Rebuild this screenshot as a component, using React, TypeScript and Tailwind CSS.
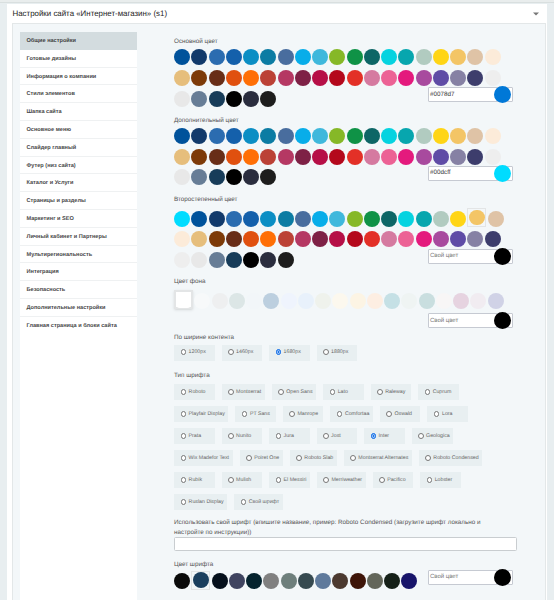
const side = [
  "Общие настройки", "Готовые дизайны", "Информация о компании", "Стили элементов", "Шапка сайта",
  "Основное меню", "Слайдер главный", "Футер (низ сайта)", "Каталог и Услуги", "Страницы и разделы",
  "Маркетинг и SEO", "Личный кабинет и Партнеры", "Мультирегиональность", "Интеграция", "Безопасность",
  "Дополнительные настройки", "Главная страница и блоки сайта",
];

const row1 = ["#00529b", "#123a6b", "#2b6cb0", "#1460ab", "#0b8ec4", "#0c7ca3", "#496d9e", "#08ade9", "#3fb8dc", "#86b827", "#0f9246", "#0d6666", "#05d3e0", "#07a6ae", "#b1cbc0", "#ffd516", "#f3c566", "#dfc3a6", "#fcebd9"];
const row2 = ["#e6be7c", "#7d3a08", "#682d17", "#e0500f", "#ff6f06", "#bb4136", "#b53863", "#7e2146", "#b60f47", "#b4081c", "#e33027", "#d57aa0", "#ec6295", "#e41a7d", "#a84a9e", "#5f4ca6", "#8681a4", "#3d3d6c", "#eeeeee"];
const row3 = ["#e8e8e8", "#677d96", "#173c59", "#000000", "#2a2d3e", "#1d1d1d"];
const base = [...row1, ...row2, ...row3];
const third = ["#00dcff", ...row1, ...row2];
const bg = ["#ffffff", "#f7f9fa", "#eeeff0", "#dce6e6", "#f2f6f9", "#bccfdf", "#eff4fd", "#e8f1fb", "#eff2ec", "#fcf8ee", "#fcf4e4", "#fdeee2", "#c5e0e5", "#eff4f3", "#c9dedf", "#f8f6f6", "#e6d3e0", "#f1ecf1", "#d0d2e6"];
const fontColors = ["#0a0a0a", "#1b3f5e", "#05101c", "#3f4460", "#05232e", "#808080", "#6e7f7c", "#364a50", "#5f7a9c", "#4c3a30", "#3e1508", "#63665a", "#152018", "#17146a"];

function Swatch({ color, selected, square }: { color: string; selected?: boolean; square?: boolean }) {
  if (selected) {
    return (
      <div className="w-[20.2px] h-[20.7px] flex items-center justify-center -mt-[1px]">
        <div className={`w-[19px] h-[19px] flex items-center justify-center border border-[#e3e5e6] ${square ? "border-2 border-[#dcdfe0] bg-white shadow-sm" : ""}`}>
          <div className={`w-[15.6px] h-[15.6px] ${square ? "rounded-sm" : "rounded-full"}`} style={{ backgroundColor: color }} />
        </div>
      </div>
    );
  }
  return (
    <div className="w-[17.25px] h-[20.7px] flex items-center justify-center">
      <div className="w-[16px] h-[16px] rounded-full" style={{ backgroundColor: color }} />
    </div>
  );
}

function ColorInput({ value, color, placeholder, className = "" }: { value?: string; color: string; placeholder?: string; className?: string }) {
  return (
    <div className={`ml-auto w-[85px] h-[15px] bg-white border border-[#c6cad2] rounded-[1px] flex items-center justify-between pl-[1.5px] pr-[1px] ${className}`}>
      <span className={`leading-none ${placeholder ? "text-[6px] text-[#777]" : "text-[6.3px] text-[#333]"}`}>{value ?? placeholder}</span>
      <div className="w-[17px] h-[17px] rounded-full shrink-0 -my-[2px]" style={{ backgroundColor: color }} />
    </div>
  );
}

function Label({ children, className = "" }: { children: string; className?: string }) {
  return <div className={`h-[9px] leading-[11px] text-[6.3px] text-[#555] whitespace-nowrap ${className}`}>{children}</div>;
}

function Chip({ label, checked }: { label: string; checked?: boolean }) {
  return (
    <label className="h-[16px] min-w-[40.5px] bg-[#e8eff1] flex items-center pl-[6.5px] pr-[3.5px] gap-[2.5px]">
      <input
        type="radio"
        readOnly
        checked={!!checked}
        className={`appearance-none shrink-0 w-[5.6px] h-[5.6px] m-0 -mt-[1px] rounded-full border-[0.7px] ${checked ? "bg-[#1a73e8] border-[#1a73e8] shadow-[inset_0_0_0_0.5px_#ffffff]" : "bg-white border-[#777]"}`}
      />
      <span className="text-[5.25px] leading-none text-[#666] whitespace-nowrap">{label}</span>
    </label>
  );
}

function Swatches({ colors, selected, square, children }: { colors: string[]; selected?: number; square?: boolean; children?: React.ReactNode }) {
  return (
    <div className="flex flex-wrap items-start w-[339px] -ml-[0.5px]">
      {colors.map((c, i) => (
        <Swatch key={i} color={c} selected={i === selected} square={square} />
      ))}
      {children}
    </div>
  );
}

const widths = ["1200px", "1460px", "1680px", "1880px"];
const fonts = [
  "Roboto", "Montserrat", "Open Sans", "Lato", "Raleway", "Cuprum", "Playfair Display", "PT Sans", "Manrope", "Comfortaa",
  "Oswald", "Lora", "Prata", "Nunito", "Jura", "Jost", "Inter", "Geologica", "Wix Madefor Text", "Poiret One", "Roboto Slab",
  "Montserrat Alternates", "Roboto Condensed", "Rubik", "Mulish", "El Messiri", "Merriweather", "Pacifico", "Lobster",
  "Ruslan Display", "Свой шрифт",
];

export default function App() {
  return (
    <div className="w-[554px] h-[600px] overflow-hidden bg-[#e8eef0] font-['Liberation_Sans',Arial,sans-serif] [text-rendering:geometricPrecision]">
      <div className="h-[3px] bg-[#e9eded] border-b border-[#d9dfdf]" />
      <div className="ml-[6.5px] mr-[7px] mt-[1px] bg-white h-[700px] flex flex-col">
        <div className="h-[19px] shrink-0 flex items-center justify-between pl-[6px] pr-[8px]">
          <span className="text-[7.9px] leading-none text-[#222] whitespace-nowrap">Настройки сайта «Интернет-магазин» (s1)</span>
          <svg width="6" height="4" viewBox="0 0 6 4"><path d="M0 0.5h6L3 3.5z" fill="#777" /></svg>
        </div>
        <div className="ml-[5px] mr-[1.5px] border border-[#e3e7e8] bg-[#f3f7f9] flex flex-1 pl-[7px] pt-[8px]">
          <div className="w-[117px] bg-white shrink-0 self-stretch">
            {side.map((s, i) => (
              <div key={s} className={`h-[17.8px] flex items-center pl-[7px] pt-[1.5px] border-b text-[5.6px] font-semibold whitespace-nowrap ${i === 0 ? "bg-[#d3dcdf] border-[#d3dcdf] text-[#444]" : "border-[#eff1f2] text-[#4a4a4a]"} ${i === side.length - 1 ? "border-b-0" : ""}`}>
                {s}
              </div>
            ))}
          </div>
          <div className="ml-[37.5px] pt-[4px] w-[345px]">
            <Label className="mb-[2px]">Основной цвет</Label>
            <Swatches colors={base}><ColorInput value="#0078d7" color="#0078d7" className="-mt-[1px]" /></Swatches>

            <Label className="mt-[5.7px] mb-[2px]">Дополнительный цвет</Label>
            <Swatches colors={base}><ColorInput value="#00dcff" color="#00dcff" className="-mt-[1px]" /></Swatches>

            <Label className="mt-[6.4px] mb-[5px]">Второстепенный цвет</Label>
            <Swatches colors={[...third.slice(0, 38), "#eeeeee", ...row3]} selected={17}>
              <ColorInput placeholder="Свой цвет" color="#000000" className="-mt-[1px]" />
            </Swatches>

            <Label className="mt-[6px] mb-[5.3px]">Цвет фона</Label>
            <Swatches colors={bg} selected={0} square>
              <ColorInput placeholder="Свой цвет" color="#000000" className="mt-[2px] mb-[3px]" />
            </Swatches>

            <Label className="mt-[0.5px] mb-[4px]">По ширине контента</Label>
            <div className="flex gap-x-[7px]">
              {widths.map((w) => <Chip key={w} label={w} checked={w === "1680px"} />)}
            </div>

            <Label className="mt-[9.5px] mb-[5px]">Тип шрифта</Label>
            <div className="flex flex-wrap w-[339px] gap-x-[7px] gap-y-[6px]">
              {fonts.map((f) => <Chip key={f} label={f} checked={f === "Inter"} />)}
            </div>

            <div className="mt-[7.5px] w-[322px] text-[6.3px] leading-[9.8px] text-[#555]">
              Использовать свой шрифт (впишите название, пример: Roboto Condensed (загрузите шрифт локально и настройте по инструкции))
            </div>
            <div className="w-[343px] h-[14px] bg-white border border-[#c9cdd0] rounded-[1.5px]" />

            <Label className="mt-[7.5px] mb-[3px]">Цвет шрифта</Label>
            <Swatches colors={fontColors} selected={1}>
              <ColorInput placeholder="Свой цвет" color="#000000" className="-mt-[1px]" />
            </Swatches>

            <Label className="mt-[6px]">Заголовки</Label>
          </div>
        </div>
      </div>
    </div>
  );
}
